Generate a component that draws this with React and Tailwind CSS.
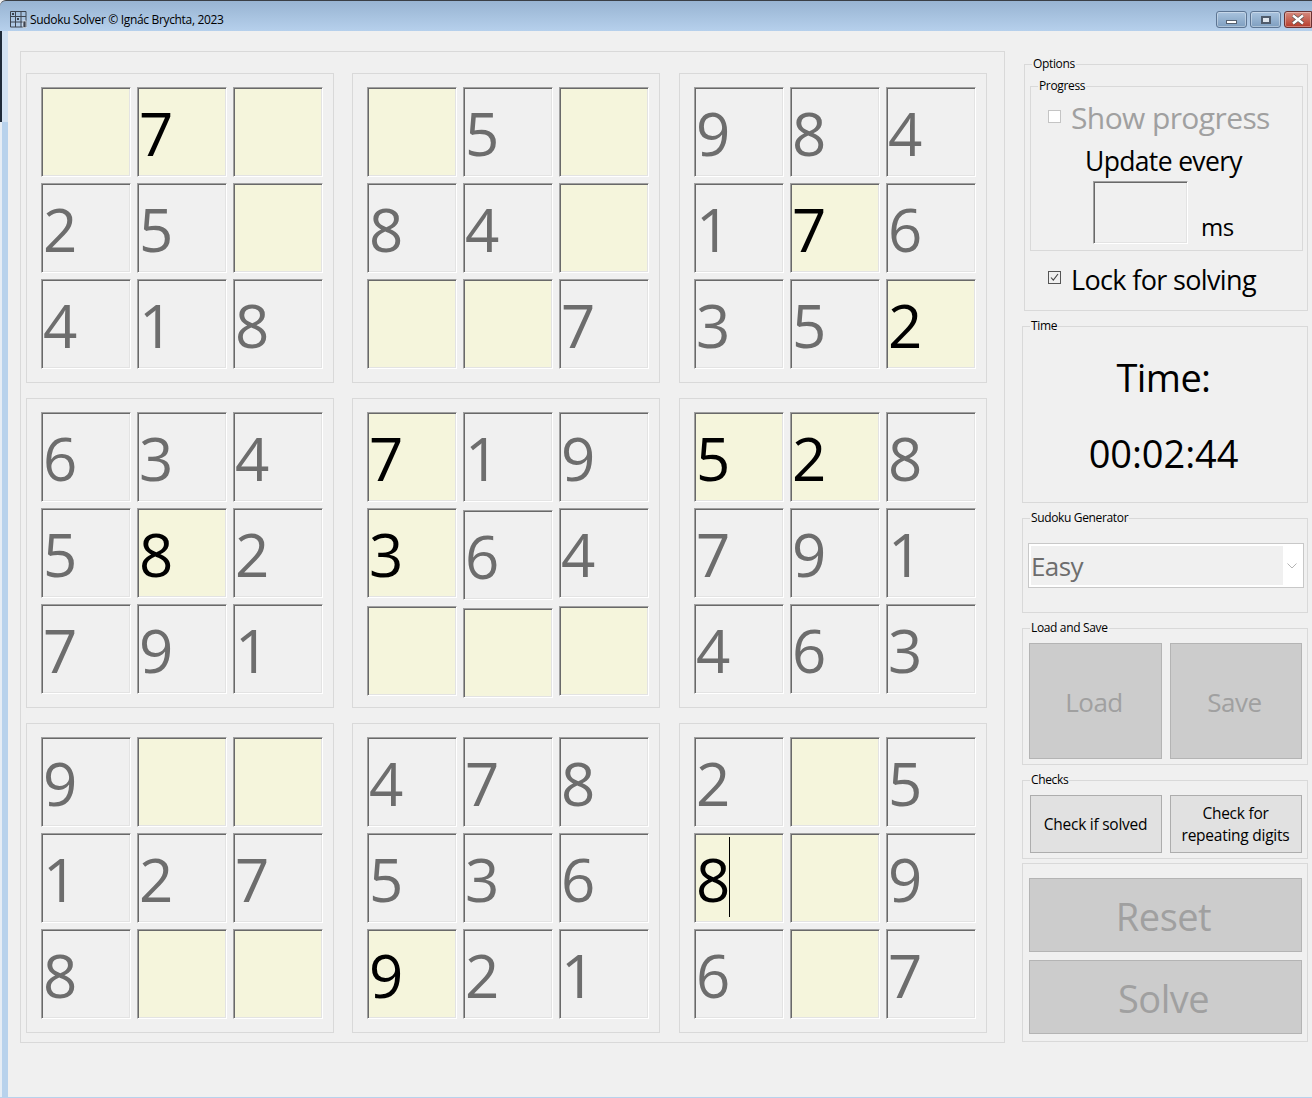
const GRID = [
  [["", "7u", ""], ["2", "5", ""], ["4", "1", "8"]],
  [["", "5", ""], ["8", "4", ""], ["", "", "7"]],
  [["9", "8", "4"], ["1", "7u", "6"], ["3", "5", "2u"]],
  [["6", "3", "4"], ["5", "8u", "2"], ["7", "9", "1"]],
  [["7u", "1", "9"], ["3u", "6", "4"], ["", "", ""]],
  [["5u", "2u", "8"], ["7", "9", "1"], ["4", "6", "3"]],
  [["9", "", ""], ["1", "2", "7"], ["8", "", ""]],
  [["4", "7", "8"], ["5", "3", "6"], ["9u", "2", "1"]],
  [["2", "", "5"], ["8c", "", "9"], ["6", "", "7"]],
];

const FONT = "font-['Open_Sans',sans-serif]";
const SUNKEN =
  "border border-t-[#a0a0a0] border-l-[#a0a0a0] border-r-white border-b-white shadow-[inset_1px_1px_0_#696969,inset_-1px_-1px_0_#e3e3e3]";

function Cell({ value, shifted }) {
  const user = value.length > 1 || value === "";
  const digit = value.charAt(0);
  const caret = value.endsWith("c");
  return (
    <div
      className={`flex h-[90px] w-[90px] items-center overflow-hidden pl-[1px] pt-[1px] text-[60px] leading-none ${SUNKEN} ${
        user ? "bg-[#f5f5dc] text-black" : "bg-[#f0f0f0] text-[#6d6d6d]"
      } ${shifted ? "mt-[2px]" : ""}`}
    >
      <span className="tracking-[-2px]">{digit}</span>
      {caret && <span className="-mt-[4px] ml-[1px] inline-block h-[80px] w-px bg-black" />}
    </div>
  );
}

function Box({ index }) {
  const rows = GRID[index];
  return (
    <div className="h-[310px] w-[308px] border border-[#d9d9d9] pl-[14px] pt-[13px]">
      <div className="grid w-fit grid-cols-[90px_90px_90px] items-start gap-[6px]">
        {rows.flat().map((v, i) => (
          <Cell
            key={i}
            value={v}
            shifted={index === 4 && (i === 4 || i === 7)}
          />
        ))}
      </div>
    </div>
  );
}

function Group({ title, className = "", children }) {
  return (
    <div className={`border border-[#d9d9d9] ${className}`}>
      {title && (
        <div className="-mt-[9px] ml-[7px] h-[17px] w-fit bg-[#f0f0f0] px-[1px] text-[12px] leading-[16px] tracking-[-0.35px] text-black">
          {title}
        </div>
      )}
      {children}
    </div>
  );
}

function Disabled({ className = "", children }) {
  return (
    <div
      className={`flex items-center justify-center border border-[#b4b4b4] bg-[#cccccc] text-[#a0a0a0] ${className}`}
    >
      {children}
    </div>
  );
}

function AppIcon() {
  return (
    <svg width="17" height="17" viewBox="0 0 17 17" fill="none" className="shrink-0">
      <path
        d="M.5.5h15.5v15.5H.5zM5.5.5v15.5M11 .5v15.5M.5 5.5H16M.5 11H16"
        stroke="#3d4450"
        strokeWidth="1"
      />
      <rect x="2" y="2" width="2" height="2" fill="#3d4450" />
      <rect x="7" y="7" width="2" height="2" fill="#3d4450" />
      <rect x="13" y="10" width="3" height="6.5" fill="#3d4450" stroke="#fff" strokeWidth="0.6" />
    </svg>
  );
}

function WinButton({ className = "", children }) {
  return (
    <div
      className={`flex h-[17px] items-center justify-center rounded-[3px] border border-[#5d7593] shadow-[inset_0_0_0_1px_rgba(255,255,255,0.35)] ${className}`}
    >
      {children}
    </div>
  );
}

export default function App() {
  return (
    <div
      className={`flex h-[1098px] w-[1312px] flex-col overflow-hidden bg-[#f0f0f0] ${FONT}`}
    >
      <div className="flex h-[31px] shrink-0 items-start rounded-tl-[6px] border-t border-t-[#3a3f45] bg-gradient-to-b from-[#98b4d2] to-[#b6d0ec] pl-[10px]">
        <div className="mt-[10px] flex items-center gap-[3px]">
          <AppIcon />
          <span className="text-[12px] leading-[16px] tracking-[-0.33px] text-black">
            Sudoku Solver © Ignác Brychta, 2023
          </span>
        </div>
        <div className="ml-auto mr-[1px] mt-[10px] flex gap-[3px]">
          <WinButton className="w-[31px] bg-gradient-to-b from-[#a9c3de] to-[#7f9fc0]">
            <span className="mt-[4px] block h-[4px] w-[11px] border border-[#55606e] bg-white" />
          </WinButton>
          <WinButton className="w-[31px] bg-gradient-to-b from-[#a9c3de] to-[#7f9fc0]">
            <span className="block h-[8px] w-[10px] border-2 border-[#4f5b6b] bg-[#dfe6ee]" />
          </WinButton>
          <WinButton className="-mr-[1px] w-[28px] rounded-r-none border-[#6a3232] bg-gradient-to-b from-[#d58a7e] to-[#b53a2a]">
            <svg width="14" height="11" viewBox="0 0 14 11">
              <path d="M2 1.5l10 8M12 1.5l-10 8" stroke="#4d4d4d" strokeWidth="3.6" />
              <path d="M2 1.5l10 8M12 1.5l-10 8" stroke="#fff" strokeWidth="2.4" />
            </svg>
          </WinButton>
        </div>
      </div>

      <div className="flex min-h-0 flex-1 border-b border-b-[#b8d2ec]">
        <div className="flex w-[8px] shrink-0 flex-col">
          <div className="h-[91px] border-l-2 border-l-[#1f2a38] bg-[#d3e2f2]" />
          <div className="flex-1 border-l-2 border-l-[#e6edf5] bg-[#b8d2ec]" />
        </div>
        <div className="flex flex-1 items-start pl-[12px] pt-[20px]">
          <div className="h-[992px] w-[985px] shrink-0 border border-[#d9d9d9] pl-[5px] pt-[21px]">
            <div className="grid grid-cols-[326px_327px_308px] gap-y-[15px]">
              {GRID.map((_, i) => (
                <Box key={i} index={i} />
              ))}
            </div>
          </div>

          <div className="ml-[17px] mt-[13px] flex w-[286px] shrink-0 flex-col">
            <Group title="Options" className="ml-[2px] h-[247px] w-[284px]">
              <div className="ml-[5px] mt-[13px]">
                <Group title="Progress" className="h-[165px] w-[273px]">
                  <div className="ml-[17px] mt-[8px] flex h-[30px] items-center gap-[10px]">
                    <span className="mb-[3px] h-[13px] w-[13px] border border-[#c4c4c4] bg-white" />
                    <span className="text-[30px] leading-[30px] tracking-[-0.6px] text-[#a0a0a0]">
                      Show progress
                    </span>
                  </div>
                  <div className="mt-[12px] pr-[6px] text-center text-[26.5px] leading-[32px] tracking-[-0.65px] text-black">
                    Update every
                  </div>
                  <div className="ml-[62px] mt-[4px] flex items-end gap-[13px]">
                    <div className={`h-[63px] w-[95px] bg-[#f0f0f0] ${SUNKEN}`} />
                    <span className="mb-[2px] text-[24px] leading-[30px] tracking-[-0.4px] text-black">ms</span>
                  </div>
                </Group>
              </div>
              <div className="ml-[23px] mt-[13px] flex h-[32px] items-center gap-[10px]">
                <span className="mb-[5px] flex h-[13px] w-[13px] items-center justify-center border border-[#555] bg-[#f0f0f0]">
                  <svg width="9" height="9" viewBox="0 0 9 9" fill="none">
                    <path d="M1 4.5l2.3 2.6L8 1" stroke="#444" strokeWidth="1.1" />
                  </svg>
                </span>
                <span className="text-[27px] leading-[32px] tracking-[-0.65px] text-black">
                  Lock for solving
                </span>
              </div>
            </Group>

            <Group title="Time" className="mt-[15px] flex h-[177px] flex-col items-stretch pr-[3px] text-center text-black">
              <div className="mt-[19px] text-[38px] leading-[46px] tracking-[-0.6px]">Time:</div>
              <div className="mt-[30px] text-[38px] leading-[46px] tracking-[-0.1px]">00:02:44</div>
            </Group>

            <Group title="Sudoku Generator" className="mt-[15px] h-[95px]">
              <div className="ml-[5px] mt-[16px] flex h-[45px] w-[276px] border border-[#c8c8c8] bg-white p-[2px]">
                <div className="flex h-full w-[252px] items-center bg-[#f0f0f0] text-[26px] leading-none tracking-[-0.6px] text-[#6d6d6d]">
                  Easy
                </div>
                <div className="flex flex-1 items-center justify-center">
                  <svg width="10" height="6" viewBox="0 0 10 6" fill="none">
                    <path d="M.5.5L5 5l4.5-4.5" stroke="#b4b4b4" strokeWidth="1" />
                  </svg>
                </div>
              </div>
            </Group>

            <Group title="Load and Save" className="mt-[15px] h-[137px]">
              <div className="ml-[6px] mt-[6px] flex gap-[8px]">
                <Disabled className="h-[116px] w-[133px] pr-[3px] pt-[2px] text-[26px] tracking-[-0.5px]">Load</Disabled>
                <Disabled className="h-[116px] w-[132px] pr-[3px] pt-[2px] text-[26px] tracking-[-0.5px]">Save</Disabled>
              </div>
            </Group>

            <Group title="Checks" className="mt-[15px] h-[79px]">
              <div className="ml-[7px] mt-[6px] flex gap-[8px]">
                <button className="h-[58px] w-[132px] border border-[#adadad] bg-[#e1e1e1] pr-[1px] text-[15.5px] leading-[22px] tracking-[-0.25px] text-black">
                  Check if solved
                </button>
                <button className="h-[58px] w-[132px] border border-[#adadad] bg-[#e1e1e1] pr-[1px] text-[15.5px] leading-[22px] tracking-[-0.25px] text-black">
                  Check for
                  <br />
                  repeating digits
                </button>
              </div>
            </Group>

            <Group className="mt-[4px] h-[179px] pl-[6px] pt-[14px]">
              <div className="flex flex-col gap-[8px]">
                <Disabled className="h-[74px] w-[273px] pr-[4px] pt-[2px] text-[38px] tracking-[-0.5px]">Reset</Disabled>
                <Disabled className="h-[74px] w-[273px] pr-[4px] pt-[2px] text-[38px] tracking-[-0.5px]">Solve</Disabled>
              </div>
            </Group>
          </div>
        </div>
      </div>
    </div>
  );
}
